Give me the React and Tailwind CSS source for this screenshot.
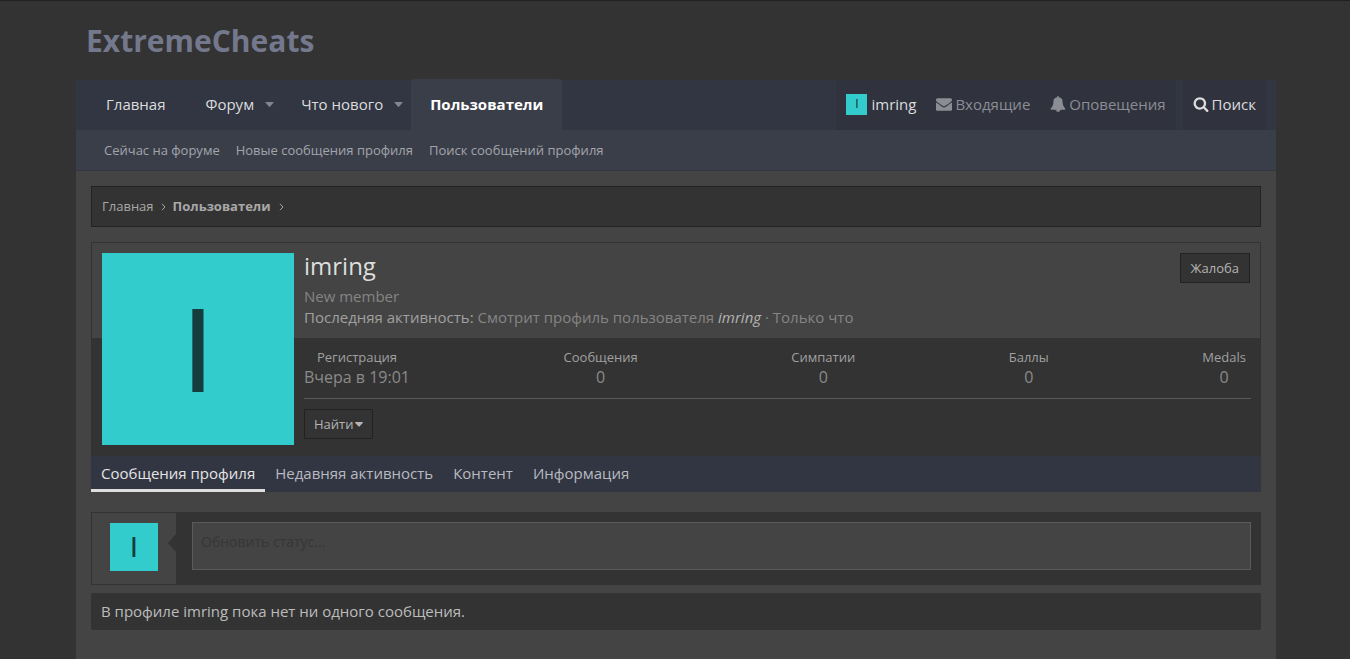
import React from 'react';

function Caret({ className }) {
  return (
    <svg viewBox="0 0 10 6" className={className} fill="currentColor" aria-hidden="true">
      <path d="M.6 0h8.8q.9.3.3 1L5.500 5.600q-.5.5-1 0L.3 1Q-.3.3.6 0z" />
    </svg>
  );
}

function Glyph({ d }) {
  return (
    <svg viewBox="0 0 1792 1792" className="size-4 shrink-0" fill="currentColor" aria-hidden="true">
      <path d={d} />
    </svg>
  );
}

const ENVELOPE =
  'M1792 710v794q0 66-47 113t-113 47h-1472q-66 0-113-47t-47-113v-794q44 49 101 87 362 246 497 345 57 42 92.500 65.500t94.500 48 110 24.500h2q51 0 110-24.500t94.500-48 92.500-65.500q170-123 498-345 57-39 100-87zm0-294q0 79-49 151t-122 123q-376 261-468 325-10 7-42.500 31t-54 38.500-52 32.500-57.500 27-50 9h-2q-23 0-50-9t-57.500-27-52-32.500-54-38.500-42.500-31q-91-64-262-182.500t-205-142.500q-62-42-117-115.500t-55-136.500q0-78 41.500-130t118.500-52h1472q65 0 112.500 47t47.500 113z';
const BELL =
  'M912 1696q0-16-16-16-59 0-101.500-42.500t-42.500-101.500q0-16-16-16t-16 16q0 73 51.500 124.500t124.500 51.500q16 0 16-16zm816-288q0 52-38 90t-90 38h-448q0 106-75 181t-181 75-181-75-75-181h-448q-52 0-90-38t-38-90q50-42 91-88t85-119.500 74.500-158.500 50-206 19.500-260q0-152 117-282.500t307-158.500q-8-19-8-39 0-40 28-68t68-28 68 28 28 68q0 20-8 39 190 28 307 158.500t117 282.500q0 139 19.500 260t50 206 74.500 158.500 85 119.500 91 88z';
const SEARCH =
  'M1216 832q0-185-131.500-316.500t-316.500-131.500-316.500 131.500-131.500 316.500 131.500 316.500 316.500 131.500 316.500-131.500 131.500-316.500zm512 832q0 52-38 90t-90 38q-54 0-90-38l-343-342q-179 124-399 124-143 0-273.500-55.500t-225-150-150-225-55.500-273.500 55.500-273.500 150-225 225-150 273.500-55.500 273.500 55.500 225 150 150 225 55.500 273.500q0 220-124 399l343 343q37 37 37 90z';

function Avatar({ className }) {
  return (
    <span
      className={`flex shrink-0 items-center justify-center bg-[#33cccc] font-['Liberation_Sans',Arial,sans-serif] leading-none text-[#143d3d] ${className}`}
    >
      I
    </span>
  );
}

function Nav() {
  return (
    <nav className="flex h-[50px] justify-between bg-[#323642] text-[#dcdcde]">
      <div className="flex pl-2.5">
        <a href="#home" className="flex items-center px-5 pb-0.5">Главная</a>
        <a href="#forum" className="flex items-center pb-0.5 pl-5">Форум</a>
        <button type="button" aria-label="Меню форума" className="px-[11px] pb-0.5 text-[#84868e]">
          <Caret className="h-[5px] w-[9px]" />
        </button>
        <a href="#new" className="flex items-center pb-0.5 pl-4">Что нового</a>
        <button type="button" aria-label="Меню нового" className="pr-2 pb-0.5 pl-[11px] text-[#84868e]">
          <Caret className="h-[5px] w-[9px]" />
        </button>
        <a
          href="#members"
          className="-mt-px flex items-center rounded-t-sm bg-[#3a3e49] px-[19px] font-bold text-white"
        >
          Пользователи
        </a>
      </div>
      <div className="flex">
        <div className="flex bg-[#30333e] text-[#8b8d94]">
          <a href="#account" className="flex items-center gap-1 px-2.5 pb-0.5 text-[#dcdcde]">
            <Avatar className="size-[21px] text-xs" />
            imring
          </a>
          <a href="#inbox" className="flex items-center gap-[3px] px-2.5 pb-0.5">
            <Glyph d={ENVELOPE} />
            Входящие
          </a>
          <a href="#alerts" className="flex items-center gap-[3px] px-2.5 pb-0.5">
            <Glyph d={BELL} />
            Оповещения
          </a>
        </div>
        <button type="button" className="mr-2.5 ml-[7px] flex items-center gap-[3px] bg-[#30333e] px-2.5 pb-0.5">
          <Glyph d={SEARCH} />
          Поиск
        </button>
      </div>
    </nav>
  );
}

const STATS = [
  ['Регистрация', 'Вчера в 19:01'],
  ['Сообщения', '0'],
  ['Симпатии', '0'],
  ['Баллы', '0'],
  ['Medals', '0'],
];

function Profile() {
  return (
    <section>
      <div className="border border-b-0 border-[#333333]">
        <div className="flex h-[95px] items-start gap-2.5 p-2.5">
          <div className="relative z-10 h-[75px] shrink-0">
            <Avatar className="size-48 pt-0.5 text-[120px]" />
          </div>
          <div className="min-w-0 flex-1 leading-[21px] text-[#858585]">
            <h1 className="mb-[7px] text-2xl leading-[26px] text-[#dedede]">imring</h1>
            <div>New member</div>
            <div>
              <span className="text-[#a0a0a0]">Последняя активность:</span> Смотрит профиль пользователя{' '}
              <a href="#imring" className="text-[#b4b4b4] italic">imring</a> · Только что
            </div>
          </div>
          <button type="button" className="h-[30px] border border-[#222222] bg-[#333333] px-2.5 text-[13px] text-[#b4b4b4]">
            Жалоба
          </button>
        </div>
        <div className="bg-[#333333] pt-2.5 pr-[9px] pb-[17px] pl-[212px]">
          <div className="flex justify-between border-b border-[#5a5a5a] pr-[5px] pb-2.5">
            {STATS.map(([label, value]) => (
              <dl key={label} className="text-center">
                <dt className="text-[13px] leading-[18px] text-[#a0a0a0]">{label}</dt>
                <dd className="text-base leading-[22px] text-[#8a8a8a]">{value}</dd>
              </dl>
            ))}
          </div>
          <button
            type="button"
            className="mt-2.5 flex h-[30px] items-center gap-0.5 border border-[#222222] bg-[#333333] px-[9px] text-[13px] text-[#b4b4b4]"
          >
            Найти
            <Caret className="h-[5px] w-2" />
          </button>
        </div>
      </div>
      <div className="flex bg-[#323642] text-[#b8bac0]">
        <a href="#posts" className="flex h-9 items-center border-b-3 border-[#dedede] px-2.5 pt-px text-[#e4e4e6]">
          Сообщения профиля
        </a>
        <a href="#activity" className="flex h-9 items-center border-b-3 border-transparent px-2.5 pt-px">Недавняя активность</a>
        <a href="#content" className="flex h-9 items-center border-b-3 border-transparent px-2.5 pt-px">Контент</a>
        <a href="#about" className="flex h-9 items-center border-b-3 border-transparent px-2.5 pt-px">Информация</a>
      </div>
    </section>
  );
}

export default function App() {
  return (
    <div className="min-h-screen border-t border-[#222222] bg-[#333333] pl-0.5 font-['Open_Sans',sans-serif] text-[15px] leading-[21px] text-[#bcbcbc]">
      <div className="mx-auto flex min-h-[calc(100vh-1px)] max-w-[1200px] flex-col">
        <header className="flex h-[79px] items-center px-2.5">
          <a href="#top" className="text-3xl font-bold text-[#74788c]">ExtremeCheats</a>
        </header>
        <Nav />
        <div className="flex h-[41px] items-center gap-4 border-b border-[#323642] bg-[#3a3e49] px-7 text-[13px] text-[#a3a5ab]">
          <a href="#online">Сейчас на форуме</a>
          <a href="#newposts">Новые сообщения профиля</a>
          <a href="#findposts">Поиск сообщений профиля</a>
        </div>
        <main className="flex-1 bg-[#444444] p-[15px]">
          <div className="mb-[15px] flex h-[41px] items-center border border-[#222222] bg-[#333333] px-2.5 text-[13px] text-[#a8a8a8]">
            <a href="#home">Главная</a>
            <svg viewBox="0 0 5 8" className="mx-[7px] mt-px h-2 w-[5px]" fill="none" stroke="currentColor" aria-hidden="true">
              <path d="M1 .8l3 3.200-3 3.200" />
            </svg>
            <a href="#members" className="font-bold">Пользователи</a>
            <svg viewBox="0 0 5 8" className="mx-2 mt-px h-2 w-[5px]" fill="none" stroke="currentColor" aria-hidden="true">
              <path d="M1 .8l3 3.200-3 3.200" />
            </svg>
          </div>
          <Profile />
          <form className="mt-5 flex border border-[#333333] bg-[#333333]">
            <div className="relative flex w-[84px] justify-center bg-[#444444] py-2.5">
              <Avatar className="size-12 text-[30px]" />
              <svg viewBox="0 0 8 18" className="absolute top-[21px] right-0 h-[18px] w-2 text-[#333333]" fill="currentColor" aria-hidden="true">
                <path d="M8 0v18L0 9z" />
              </svg>
            </div>
            <div className="flex-1 pt-[9px] pr-[9px] pb-3.5 pl-4">
              <textarea
                aria-label="Обновить статус"
                placeholder="Обновить статус..."
                className="block h-12 w-full resize-none border border-[#5a5a5a] bg-[#444444] px-2 py-2 text-sm leading-[21px] text-[#bcbcbc] outline-none placeholder:text-[#363636]"
              />
            </div>
          </form>
          <div className="mt-2 rounded-xs bg-[#333333] px-2.5 py-2">
            В профиле imring пока нет ни одного сообщения.
          </div>
        </main>
      </div>
    </div>
  );
}
